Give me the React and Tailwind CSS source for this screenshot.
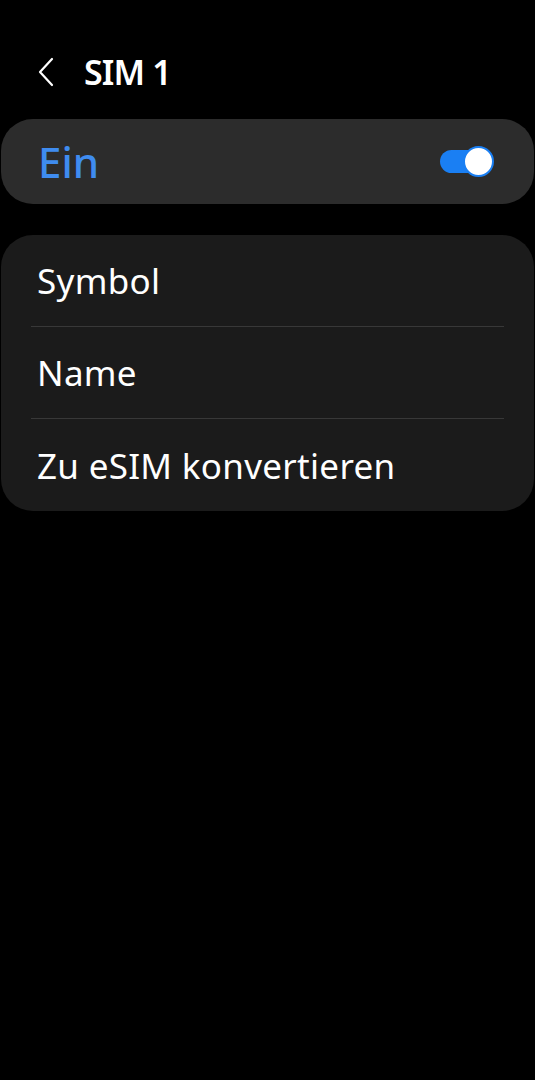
import React from 'react';

const Row = ({ label, last }) => (
  <div className="px-[30px]">
    <div className={`h-[92px] flex items-center px-[6px] ${last ? '' : 'border-b border-[#383838]'}`}>
      <span className="text-[35px] tracking-[0.3px] text-white leading-none">{label}</span>
    </div>
  </div>
);

const App = () => {
  return (
    <div
      className="w-[535px] h-[1080px] bg-black text-white overflow-hidden"
      style={{ fontFamily: '"Noto Sans", Roboto, sans-serif' }}
    >
      <header className="h-[119px] flex items-center pl-[36px] pt-[24px] gap-[28px]">
        <svg width="20" height="30" viewBox="0 0 20 30" fill="none">
          <path d="M16 2 L4 15 L16 28" stroke="white" strokeWidth="2.2" strokeLinecap="round" strokeLinejoin="round" />
        </svg>
        <h1 className="text-[34px] font-semibold leading-none tracking-tight">SIM 1</h1>
      </header>

      <div className="mx-px h-[85px] rounded-[32px] bg-[#2c2c2c] flex items-center justify-between pl-[37px] pr-[40px]">
        <span className="text-[42px] text-[#3f8cf0] leading-none font-medium">Ein</span>
        <div className="relative w-[54px] h-[31px] flex items-center">
          <div className="w-[50px] h-[23px] rounded-full bg-[#1a7ff3]" />
          <div className="absolute right-0 top-0 w-[31px] h-[31px] rounded-full bg-white border-2 border-[#1a7ff3]" />
        </div>
      </div>

      <div className="mx-px mt-[31px] rounded-[32px] bg-[#1b1b1b]">
        <Row label="Symbol" />
        <Row label="Name" />
        <Row label="Zu eSIM konvertieren" last />
      </div>
    </div>
  );
};

export default App;
